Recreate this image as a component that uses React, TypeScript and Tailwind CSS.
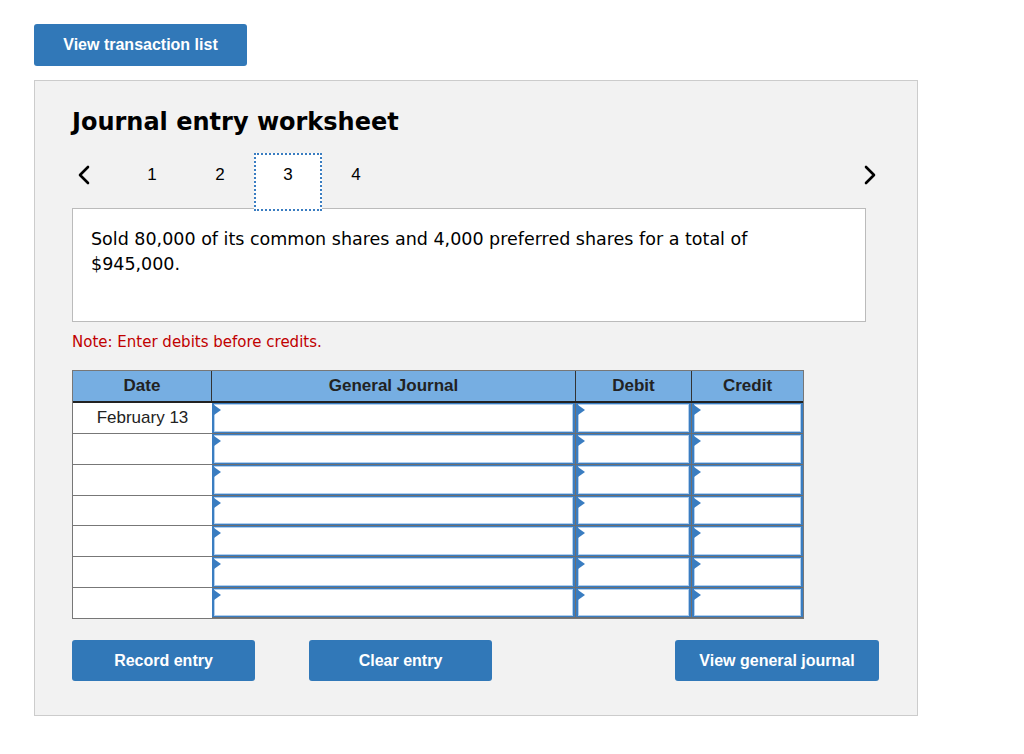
import React from "react";

const verdana = { fontFamily: '"DejaVu Sans", Verdana, sans-serif' };
const arial = { fontFamily: '"Liberation Sans", Arial, sans-serif' };

function Chevron({ dir }: { dir: "left" | "right" }) {
  return (
    <svg width="12" height="20" viewBox="0 0 12 20" fill="none">
      {dir === "left" ? (
        <polyline points="10,2 2,10 10,18" stroke="#000" strokeWidth="2.6" strokeLinecap="round" strokeLinejoin="round" />
      ) : (
        <polyline points="2,2 10,10 2,18" stroke="#000" strokeWidth="2.6" strokeLinecap="round" strokeLinejoin="round" />
      )}
    </svg>
  );
}

function InputCell({ last }: { last?: boolean }) {
  return (
    <div className={"h-full bg-[#6f6f6f] pb-[1px] " + (last ? "" : "pr-[1px]")}>
      <div className="relative h-full bg-white border-x-2 border-y border-[#3a7dc1] shadow-[inset_0_0_0_1px_#b3cfec]">
        <div className="absolute left-0 top-[1px] w-0 h-0 border-y-[5px] border-y-transparent border-l-[7px] border-l-[#3a7dc1]" />
      </div>
    </div>
  );
}

export default function App() {
  const rowHeights = ["h-[31px]", "h-[31px]", "h-[31px]", "h-[30px]", "h-[31px]", "h-[31px]", "h-[30px]"];
  const tabs = ["1", "2", "3", "4"];
  return (
    <div className="min-h-[754px] bg-white pt-[24px] pl-[34px]" style={arial}>
      <button className="w-[213px] h-[42px] rounded-[3px] bg-[#3178b8] text-white font-bold text-[16px]">
        View transaction list
      </button>

      <div className="mt-[14px] w-[884px] bg-[#f2f2f2] border border-[#cccccc] pt-[27px] pb-[34px] px-[37px]">
        <h1 className="text-[24px] leading-[29px] font-bold text-black" style={verdana}>
          Journal entry worksheet
        </h1>

        <div className="mt-[16px] h-[58px] flex items-start justify-between">
          <div className="flex items-start h-full">
            <div className="w-[24px] pt-[12px] flex justify-center">
              <Chevron dir="left" />
            </div>
            <div className="ml-[22px] flex h-full">
              {tabs.map((t) => (
                <div
                  key={t}
                  className={
                    "relative z-10 w-[68px] h-full flex justify-center text-[17px] leading-[20px] text-black " +
                    (t === "3" ? "bg-white border-2 border-dotted border-[#3a7dc1] pt-[10px]" : "pt-[12px]")
                  }
                >
                  {t}
                </div>
              ))}
            </div>
          </div>
          <div className="w-[20px] pt-[12px] flex justify-center">
            <Chevron dir="right" />
          </div>
        </div>

        <div
          className="-mt-[3px] w-[794px] h-[114px] bg-white border border-[#bbbbbb] pt-[18px] px-[18px] text-[17.5px] leading-[25px] text-black"
          style={verdana}
        >
          Sold 80,000 of its common shares and 4,000 preferred shares for a total of
          <br />
          $945,000.
        </div>

        <p className="mt-[10px] text-[15px] leading-[20px] text-[#c00000]" style={verdana}>
          Note: Enter debits before credits.
        </p>

        <div className="mt-[18px] w-[732px] border border-[#777]">
          <div className="grid grid-cols-[139px_364px_116px_111px] h-[32px] bg-[#76aee2] border-b-2 border-[#222] text-[17px] font-bold text-[#222]">
            <div className="flex items-center justify-center border-r border-[#333]">Date</div>
            <div className="flex items-center justify-center border-r border-[#333]">General Journal</div>
            <div className="flex items-center justify-center border-r border-[#333]">Debit</div>
            <div className="flex items-center justify-center">Credit</div>
          </div>
          {rowHeights.map((h, r) => (
            <div key={r} className={"grid grid-cols-[139px_364px_116px_111px] " + h}>
              <div
                className={
                  "bg-white flex items-center justify-center text-[17px] text-[#222] " +
                  (r === rowHeights.length - 1 ? "" : "border-b border-[#777]")
                }
              >
                {r === 0 ? "February 13" : ""}
              </div>
              <InputCell />
              <InputCell />
              <InputCell last />
            </div>
          ))}
        </div>

        <div className="mt-[21px] w-[807px] flex text-[16px] font-bold text-white">
          <button className="w-[183px] h-[41px] rounded-[3px] bg-[#3178b8]">Record entry</button>
          <button className="ml-[54px] w-[183px] h-[41px] rounded-[3px] bg-[#3178b8]">Clear entry</button>
          <button className="ml-auto w-[204px] h-[41px] rounded-[3px] bg-[#3178b8]">View general journal</button>
        </div>
      </div>
    </div>
  );
}
